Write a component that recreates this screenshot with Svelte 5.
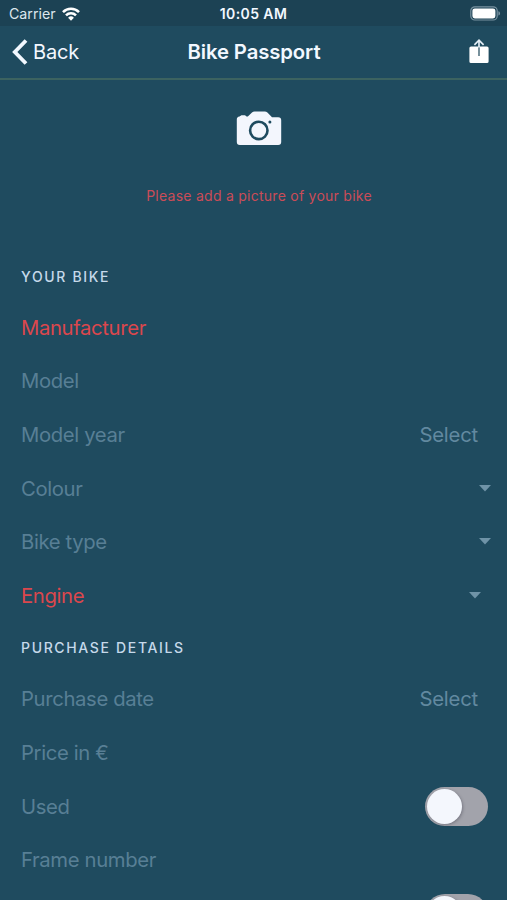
<script lang="ts">
  type Field = {
    label: string;
    kind?: 'select' | 'dropdown' | 'toggle';
    required?: boolean;
    inset?: boolean;
  };

  type Section = {
    title: string;
    fields: Field[];
  };

  const sections: Section[] = [
    {
      title: 'Your bike',
      fields: [
        { label: 'Manufacturer', required: true },
        { label: 'Model' },
        { label: 'Model year', kind: 'select' },
        { label: 'Colour', kind: 'dropdown' },
        { label: 'Bike type', kind: 'dropdown' },
        { label: 'Engine', kind: 'dropdown', required: true, inset: true }
      ]
    },
    {
      title: 'Purchase details',
      fields: [
        { label: 'Purchase date', kind: 'select' },
        { label: 'Price in €' },
        { label: 'Used', kind: 'toggle' },
        { label: 'Frame number' },
        { label: '', kind: 'toggle' }
      ]
    }
  ];
</script>

<div class="screen">
  <div class="status-bar">
    <div class="carrier">
      <span>Carrier</span>
      <svg class="wifi" width="18" height="14" viewBox="0 0 18 14" fill="none" stroke="currentColor" stroke-width="2.6" aria-hidden="true">
        <path d="M1 5.1a11.4 11.4 0 0 1 16 0" />
        <path d="M4 8.3a7.1 7.1 0 0 1 10 0" />
        <path d="M9 13.7 6.1 10.8a4.1 4.1 0 0 1 5.8 0z" fill="currentColor" stroke="none" />
      </svg>
    </div>
    <time>10:05 AM</time>
    <svg class="battery" width="31" height="15" viewBox="0 0 31 15" aria-hidden="true">
      <rect x="0.8" y="0.8" width="26.4" height="13.2" rx="4" fill="none" stroke="#7892a0" stroke-width="1.2" />
      <rect x="2.4" y="2.4" width="23" height="10" rx="2.4" fill="#fff" />
      <path d="M28.4 5.2c2.2.6 2.2 3.8 0 4.4z" fill="#7892a0" />
    </svg>
  </div>

  <header>
    <button class="back">
      <svg width="16" height="26" viewBox="0 0 16 26" fill="none" stroke="currentColor" stroke-width="3.8" aria-hidden="true">
        <path d="M14 1.5 2.8 13 14 24.5" />
      </svg>
      <span>Back</span>
    </button>
    <h1>Bike Passport</h1>
    <button class="share" aria-label="Share">
      <svg width="20" height="25" viewBox="0 0 20 25" aria-hidden="true">
        <path d="M2 7.5h16a1.6 1.6 0 0 1 1.6 1.6v13.4a1.6 1.6 0 0 1-1.6 1.6H2a1.6 1.6 0 0 1-1.6-1.6V9.1A1.6 1.6 0 0 1 2 7.5z" fill="#fff" />
        <path d="M10 8v9" stroke="#557583" stroke-width="1.6" />
        <path d="M10 1.5v7M5.4 5.8 10 1.2l4.6 4.6" fill="none" stroke="#e4eef6" stroke-width="1.7" />
      </svg>
    </button>
  </header>

  <main>
    <div class="photo">
      <svg width="46" height="36" viewBox="0 0 46 36" aria-hidden="true">
        <path d="M3.5 5.6 5.4 4.2H9l1.6 1.4h1.2L16 1.6Q17.1.6 18.6.6h10.2q1.5 0 2.6 1L36 6.2h6.2a3 3 0 0 1 3 3V31a3 3 0 0 1-3 3H3.8a3 3 0 0 1-3-3V8.6q0-2.6 2.7-3z" fill="#f3f6fd" />
        <circle cx="22.8" cy="19.4" r="8.7" fill="none" stroke="#1f4b5f" stroke-width="2.6" />
        <circle cx="33.9" cy="11.1" r="1.5" fill="#1f4b5f" />
      </svg>
      <p>Please add a picture of your bike</p>
    </div>

    {#each sections as section}
      <section>
        <h2>{section.title}</h2>
        {#each section.fields as field}
          <div class="field" class:required={field.required} class:inset={field.inset}>
            <span class="label">{field.label}</span>
            {#if field.kind === 'select'}
              <span class="select">Select</span>
            {:else if field.kind === 'dropdown'}
              <svg class="caret" width="12" height="7" viewBox="0 0 12 7" aria-hidden="true">
                <path d="M0 0h12L6 6.6z" fill="currentColor" />
              </svg>
            {:else if field.kind === 'toggle'}
              <span class="toggle"><span class="knob"></span></span>
            {/if}
          </div>
        {/each}
      </section>
    {/each}
  </main>
</div>

<style>
  :global(body) {
    background: #1f4b5f;
  }

  .screen {
    height: 900px;
    overflow: hidden;
    display: flex;
    flex-direction: column;
    background: #1f4b5f;
    color: #f2f8ff;
    font-family: Inter, Roboto, sans-serif;
  }

  .status-bar {
    flex: none;
    box-sizing: border-box;
    height: 26px;
    padding: 1px 6px 0 9px;
    display: grid;
    grid-template-columns: 1fr auto 1fr;
    align-items: center;
    background: #1c4254;
    font-size: 14.2px;
  }

  .carrier {
    display: flex;
    align-items: center;
    gap: 6px;
    color: #dce7ed;
  }

  .wifi {
    color: #fff;
  }

  time {
    margin-right: 3px;
    font-weight: 600;
    font-size: 14px;
    letter-spacing: 0.4px;
  }

  .battery {
    justify-self: end;
  }

  header {
    flex: none;
    box-sizing: border-box;
    height: 54px;
    padding: 0 18px 1px 12px;
    display: grid;
    grid-template-columns: 1fr auto 1fr;
    align-items: center;
    border-bottom: 2px solid #3c6360;
  }

  button {
    border: 0;
    padding: 0;
    background: none;
    color: inherit;
    font: inherit;
  }

  .back {
    display: flex;
    align-items: center;
    gap: 5px;
    font-size: 20px;
    letter-spacing: -0.2px;
  }

  h1 {
    margin: 0 0 0 7px;
    font-size: 20.3px;
    font-weight: 600;
    letter-spacing: -0.1px;
  }

  .share {
    justify-self: end;
    height: 25px;
  }

  main {
    flex: 1;
    min-height: 0;
  }

  .photo {
    height: 171.8px;
    box-sizing: border-box;
    padding: 31px 0 0 11px;
    display: flex;
    flex-direction: column;
    align-items: center;
    gap: 39px;
  }

  .photo p {
    margin: 0;
    color: #cb4c57;
    font-size: 14px;
    line-height: 20px;
    letter-spacing: 0.26px;
  }

  h2 {
    margin: 0;
    padding-left: 21px;
    color: #c6d9ea;
    font-size: 14px;
    font-weight: 500;
    line-height: 49.3px;
    letter-spacing: 1.65px;
    text-transform: uppercase;
  }

  .field {
    height: 53.7px;
    box-sizing: border-box;
    padding: 0 16px 0 21px;
    display: flex;
    align-items: center;
    justify-content: space-between;
    color: #587f95;
    font-size: 20.3px;
    letter-spacing: -0.36px;
  }

  .field.inset {
    padding-right: 26px;
  }

  .label,
  .select {
    padding-bottom: 1.4px;
  }

  .required .label {
    color: #db474d;
  }

  .select {
    margin-right: 13px;
    color: #6289a0;
    letter-spacing: -0.2px;
  }

  .caret {
    margin-top: -2px;
    color: #6f93a7;
  }

  .toggle {
    box-sizing: border-box;
    width: 63px;
    height: 39.5px;
    margin-right: 3.5px;
    padding: 2px;
    border-radius: 20px;
    background: #a2a3ab;
  }

  .knob {
    display: block;
    width: 35.5px;
    height: 35.5px;
    border-radius: 50%;
    background: #f4f7fd;
    box-shadow: 1px 1px 3px rgba(60, 60, 75, 0.4);
  }
</style>
